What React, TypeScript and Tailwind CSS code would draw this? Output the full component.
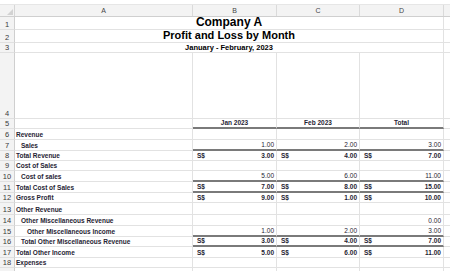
import React from "react";

type RowDef = {
  n: number | string;
  h: number;
  a?: string;
  lvl?: number;
  vals?: (string | null)[];
  cur?: boolean;
  bold?: boolean;
  hdr?: boolean;
  thick?: boolean; // thick bottom border on B-D
};

const rows: RowDef[] = [
  { n: 4, h: 66 },
  { n: 5, h: 10, thick: true, hdr: true },
  { n: 6, h: 11, a: "Revenue", lvl: 0 },
  { n: 7, h: 11, a: "Sales", lvl: 1, vals: ["1.00", "2.00", "3.00"], thick: true },
  { n: 8, h: 10, a: "Total Revenue", lvl: 0, vals: ["3.00", "4.00", "7.00"], cur: true, bold: true },
  { n: 9, h: 10, a: "Cost of Sales", lvl: 0 },
  { n: 10, h: 11, a: "Cost of sales", lvl: 1, vals: ["5.00", "6.00", "11.00"], thick: true },
  { n: 11, h: 11, a: "Total Cost of Sales", lvl: 0, vals: ["7.00", "8.00", "15.00"], cur: true, bold: true, thick: true },
  { n: 12, h: 10, a: "Gross Profit", lvl: 0, vals: ["9.00", "1.00", "10.00"], cur: true, bold: true },
  { n: 13, h: 12, a: "Other Revenue", lvl: 0 },
  { n: 14, h: 11, a: "Other Miscellaneous Revenue", lvl: 1, vals: [null, null, "0.00"] },
  { n: 15, h: 11, a: "Other Miscellaneous Income", lvl: 2, vals: ["1.00", "2.00", "3.00"], thick: true },
  { n: 16, h: 10, a: "Total Other Miscellaneous Revenue", lvl: 1, vals: ["3.00", "4.00", "7.00"], cur: true, bold: true, thick: true },
  { n: 17, h: 11, a: "Total Other Income", lvl: 0, vals: ["5.00", "6.00", "11.00"], cur: true, bold: true },
  { n: 18, h: 10, a: "Expenses", lvl: 0 },
  { n: "", h: 10 },
];

const font = { fontFamily: '"Liberation Sans", Arial, sans-serif' };

function RowHeader({ n, h }: { n: number | string; h: number }) {
  return (
    <div
      className="w-[15px] shrink-0 bg-[#f3f3f3] border-r border-b border-r-[#cfcfcf] border-b-[#e0e0e0] flex items-end justify-center text-[7.5px] leading-none text-[#3a3a3a] pb-[1px]"
      style={{ height: h }}
    >
      {n}
    </div>
  );
}

function DataRow({ r }: { r: RowDef }) {
  const pl = r.lvl === 2 ? "pl-[12px]" : r.lvl === 1 ? "pl-[6px]" : "pl-[1px]";
  const bb = r.thick ? "border-b-2 border-b-[#7a7a7a]" : "border-b border-b-[#e2e2e2]";
  const numCls = r.bold ? "font-bold" : "font-normal";
  const widths = ["w-[84px]", "w-[83px]", "w-[84px]"];
  return (
    <div className="flex" style={{ height: r.h }}>
      <RowHeader n={r.n} h={r.h} />
      <div
        className={`w-[178px] shrink-0 border-r border-r-[#e2e2e2] border-b border-b-[#e2e2e2] flex items-end ${pl} pb-[1px] text-[6.5px] leading-none font-bold text-[#1f2433] whitespace-nowrap`}
      >
        {r.a}
      </div>
      {r.hdr
        ? ["Jan 2023", "Feb 2023", "Total"].map((t, i) => (
            <div
              key={i}
              className={`${widths[i]} shrink-0 border-r border-r-[#e2e2e2] ${bb} flex items-end justify-center pb-[1px] text-[6.5px] leading-none font-bold text-[#1f2433]`}
            >
              {t}
            </div>
          ))
        : [0, 1, 2].map((i) => (
            <div
              key={i}
              className={`${widths[i]} shrink-0 border-r border-r-[#e2e2e2] ${bb} flex items-end justify-between pl-[4px] pr-[2px] pb-[1px] text-[6.5px] leading-none text-[#1f2433] whitespace-nowrap`}
            >
              <span className="font-bold">{r.cur ? "S$" : ""}</span>
              <span className={numCls}>{r.vals ? r.vals[i] ?? "" : ""}</span>
            </div>
          ))}
      <div className="flex-1 border-b border-b-[#e2e2e2]" />
    </div>
  );
}

function TitleRow({ n, h, text, size }: { n: number; h: number; text: string; size: string }) {
  return (
    <div className="flex" style={{ height: h }}>
      <RowHeader n={n} h={h} />
      <div
        className={`w-[429px] shrink-0 border-r border-r-[#e2e2e2] border-b border-b-[#e2e2e2] flex items-end justify-center leading-none font-bold text-black ${size} pb-[1px]`}
      >
        {text}
      </div>
      <div className="flex-1 border-b border-b-[#e2e2e2]" />
    </div>
  );
}

export default function App() {
  return (
    <div className="w-[450px] h-[271px] overflow-hidden bg-white" style={font}>
      <div className="h-[5px] bg-white border-b border-b-[#e6e6e6]" />
      <div className="flex h-[12px] bg-[#f3f3f3] border-b border-b-[#cfcfcf]">
        <div className="w-[15px] shrink-0 border-r border-r-[#d6d6d6] relative">
          <div className="absolute right-[1px] bottom-[1px] w-0 h-0 border-l-[6px] border-l-transparent border-b-[6px] border-b-[#d2d2d2]" />
        </div>
        {[
          ["A", "w-[178px]"],
          ["B", "w-[84px]"],
          ["C", "w-[83px]"],
          ["D", "w-[84px]"],
        ].map(([l, w]) => (
          <div
            key={l}
            className={`${w} shrink-0 border-r border-r-[#dadada] flex items-center justify-center text-[7px] leading-none text-[#444]`}
          >
            {l}
          </div>
        ))}
        <div className="flex-1" />
      </div>
      <TitleRow n={1} h={13} text="Company A" size="text-[12px]" />
      <TitleRow n={2} h={13} text="Profit and Loss by Month" size="text-[11px]" />
      <TitleRow n={3} h={10} text="January - February, 2023" size="text-[7.5px]" />
      {rows.map((r, i) => (
        <DataRow key={i} r={r} />
      ))}
    </div>
  );
}
